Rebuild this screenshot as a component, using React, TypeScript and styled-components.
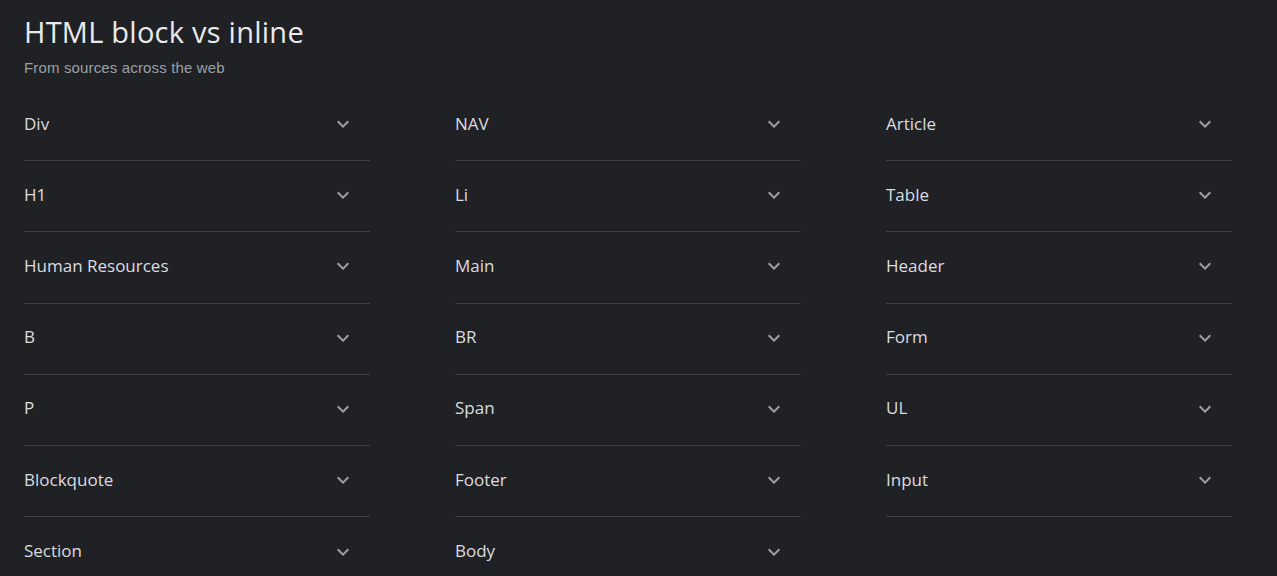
import React from "react";
import styled, { createGlobalStyle } from "styled-components";

const Global = createGlobalStyle`
  html, body { margin: 0; padding: 0; background: #202124; }
  body { font-family: "Open Sans", "Liberation Sans", Arial, sans-serif; }
`;

const Page = styled.div`
  background: #202124;
  min-height: 576px;
  padding: 14px 0 0 24px;
  box-sizing: border-box;
`;

const Title = styled.h1`
  margin: 0;
  font-family: "Open Sans", Roboto, sans-serif;
  font-weight: 400;
  font-size: 29px;
  letter-spacing: 0.25px;
  line-height: 36px;
  color: #e8eaed;
`;

const Subtitle = styled.div`
  margin-top: 8px;
  font-family: "Liberation Sans", Arial, sans-serif;
  font-size: 15px;
  letter-spacing: 0.15px;
  line-height: 20px;
  color: #9aa0a6;
`;

const Grid = styled.div`
  margin-top: 12px;
  display: grid;
  grid-template-columns: repeat(3, 346px);
  column-gap: 85px;
`;

const Column = styled.div`
  display: flex;
  flex-direction: column;
`;

const Row = styled.div<{ $last?: boolean }>`
  height: 71.2px;
  box-sizing: border-box;
  display: flex;
  align-items: center;
  justify-content: space-between;
  border-bottom: ${(p) => (p.$last ? "none" : "1px solid #3c4043")};
  cursor: pointer;
`;

const Label = styled.span`
  font-family: "Open Sans", Roboto, sans-serif;
  font-size: 17px;
  line-height: 22px;
  margin-bottom: 3px;
  color: #dadce0;
`;

const Chevron = styled.svg`
  width: 24px;
  height: 24px;
  margin-right: 15px;
  margin-bottom: 2px;
  fill: #9aa0a6;
  flex: none;
`;

const columns: string[][] = [
  ["Div", "H1", "Human Resources", "B", "P", "Blockquote", "Section"],
  ["NAV", "Li", "Main", "BR", "Span", "Footer", "Body"],
  ["Article", "Table", "Header", "Form", "UL", "Input"],
];

export default function App() {
  return (
    <Page>
      <Global />
      <Title>HTML block vs inline</Title>
      <Subtitle>From sources across the web</Subtitle>
      <Grid>
        {columns.map((col, ci) => (
          <Column key={ci}>
            {col.map((item, i) => (
              <Row key={item} $last={ci < 2 && i === col.length - 1}>
                <Label>{item}</Label>
                <Chevron viewBox="0 0 24 24">
                  <path d="M16.59 8.59L12 13.17 7.41 8.59 6 10l6 6 6-6z" />
                </Chevron>
              </Row>
            ))}
          </Column>
        ))}
      </Grid>
    </Page>
  );
}
